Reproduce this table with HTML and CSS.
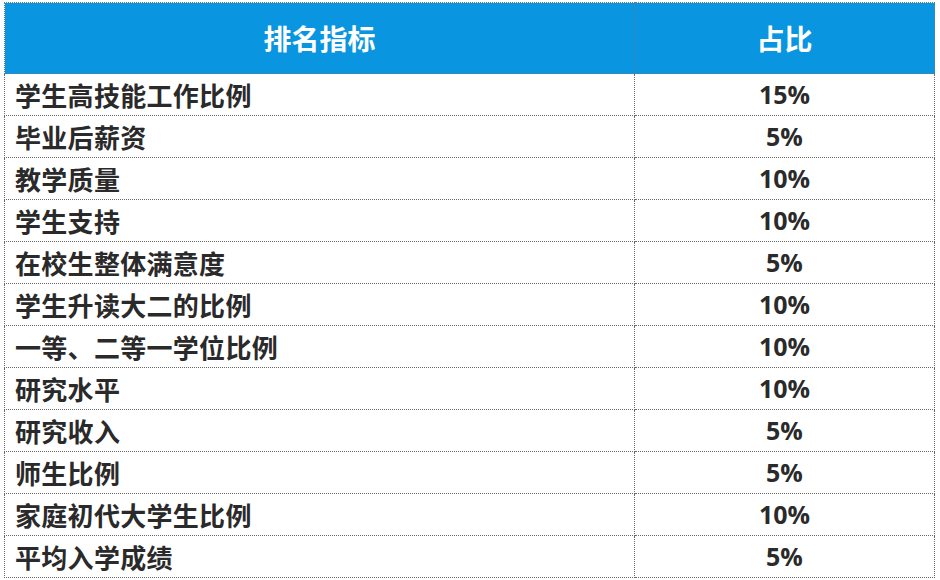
FILE: index.html
```html
<!DOCTYPE html>
<html lang="zh-CN">
<head>
<meta charset="utf-8">
<link rel="stylesheet" href="styles.css">
</head>
<body>
<table class="rank">
  <thead>
    <tr><th class="c-name">排名指标</th><th class="c-pct">占比</th></tr>
  </thead>
  <tbody>
    <tr><td class="c-name">学生高技能工作比例</td><td class="c-pct">15%</td></tr>
    <tr><td class="c-name">毕业后薪资</td><td class="c-pct">5%</td></tr>
    <tr><td class="c-name">教学质量</td><td class="c-pct">10%</td></tr>
    <tr><td class="c-name">学生支持</td><td class="c-pct">10%</td></tr>
    <tr><td class="c-name">在校生整体满意度</td><td class="c-pct">5%</td></tr>
    <tr><td class="c-name">学生升读大二的比例</td><td class="c-pct">10%</td></tr>
    <tr><td class="c-name">一等、二等一学位比例</td><td class="c-pct">10%</td></tr>
    <tr><td class="c-name">研究水平</td><td class="c-pct">10%</td></tr>
    <tr><td class="c-name">研究收入</td><td class="c-pct">5%</td></tr>
    <tr><td class="c-name">师生比例</td><td class="c-pct">5%</td></tr>
    <tr><td class="c-name">家庭初代大学生比例</td><td class="c-pct">10%</td></tr>
    <tr><td class="c-name">平均入学成绩</td><td class="c-pct">5%</td></tr>
  </tbody>
</table>
</body>
</html>
```
FILE: styles.css
```css
html, body {
  margin: 0;
  background: #ffffff;
}
body {
  padding: 2px 4px;
  font-family: "Noto Sans CJK SC", "Open Sans", sans-serif;
}
.rank {
  width: 931px;
  border-collapse: collapse;
  table-layout: fixed;
}
.rank th, .rank td {
  border: 1px dotted #6a6a6a;
  padding: 0;
  box-sizing: border-box;
}
.rank th {
  height: 71px;
  background: #0a95e0;
  color: #ffffff;
  font-size: 28px;
  font-weight: 700;
  text-align: center;
  border-color: #5a7f95;
}
.rank td {
  height: 42px;
  color: #2a2a2a;
  font-size: 26px;
  font-weight: 700;
  line-height: 1;
}
.rank .c-name {
  width: 630px;
}
.rank td.c-name {
  padding-left: 10px;
  letter-spacing: 0.3px;
}
.rank .c-pct {
  text-align: center;
}
.rank td.c-pct {
  font-family: "Open Sans", "Noto Sans CJK SC", sans-serif;
  font-size: 25px;
}
```
